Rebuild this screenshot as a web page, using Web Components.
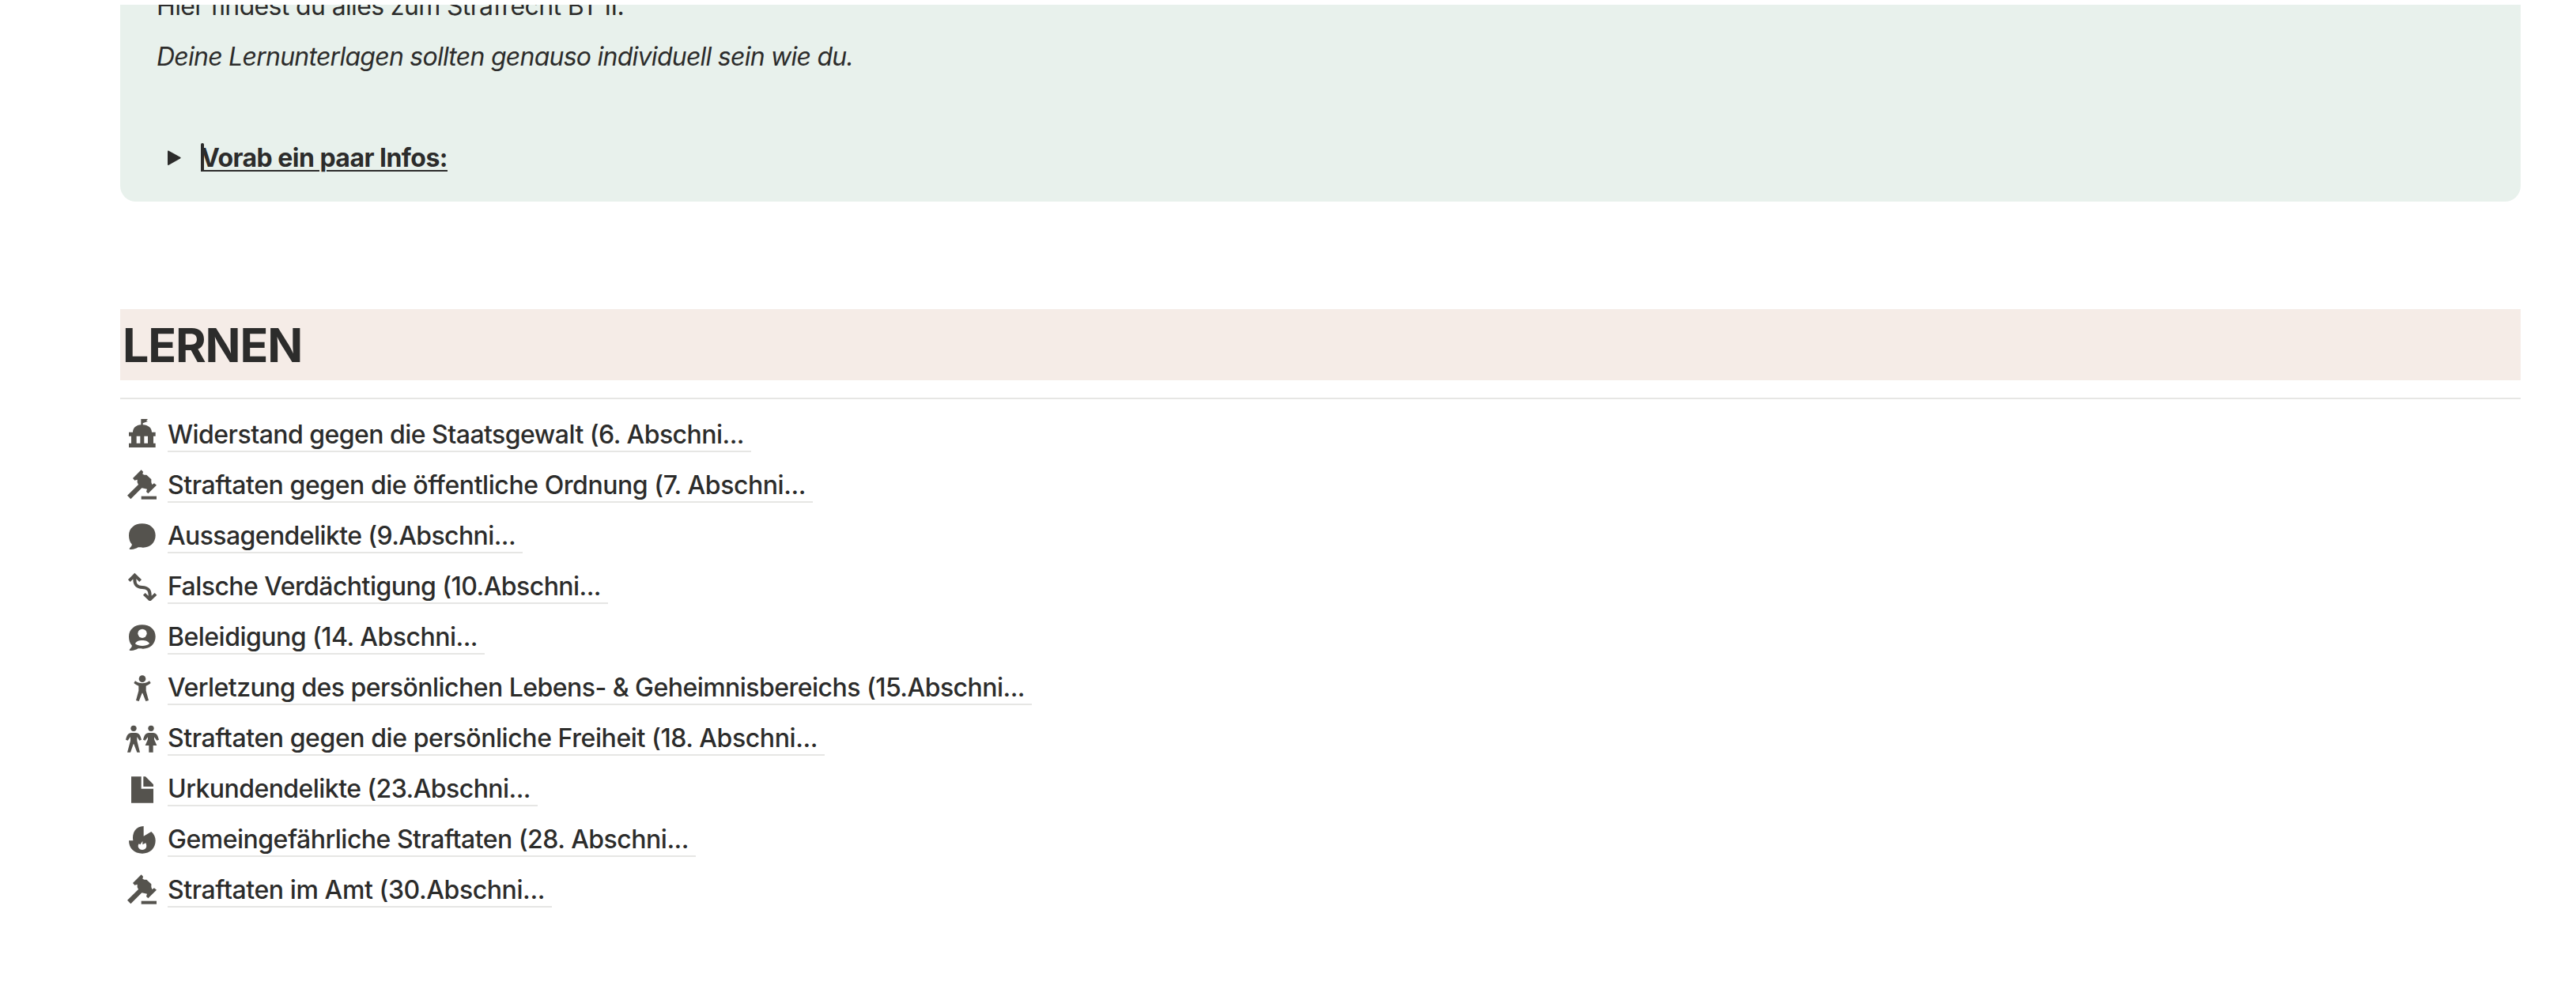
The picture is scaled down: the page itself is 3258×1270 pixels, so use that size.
<!DOCTYPE html>
<html lang="de">
<head>
<meta charset="utf-8">
<title>Strafrecht BT II</title>
<style>
  body {
    margin: 0;
    background: #fff;
    color: #2c2c2b;
    font-family: Inter, "Liberation Sans", sans-serif;
    font-size: 32px;
    line-height: 64px;
  }
</style>
</head>
<body>
<notes-page>
  <info-callout>
    <fit-text width="591">Hier findest du alles zum Strafrecht BT II.</fit-text>
    <fit-text width="881" class="italic">Deine Lernunterlagen sollten genauso individuell sein wie du.</fit-text>
    <toggle-line><fit-text width="312">Vorab ein paar Infos:</fit-text></toggle-line>
  </info-callout>
  <section-title><fit-text width="227">LERNEN</fit-text></section-title>
  <page-link icon="government" width="729">Widerstand gegen die Staatsgewalt (6. Abschni...</page-link>
  <page-link icon="gavel" width="807">Straftaten gegen die öffentliche Ordnung (7. Abschni...</page-link>
  <page-link icon="chat" width="440">Aussagendelikte (9.Abschni...</page-link>
  <page-link icon="path" width="548">Falsche Verdächtigung (10.Abschni...</page-link>
  <page-link icon="user" width="392">Beleidigung (14. Abschni...</page-link>
  <page-link icon="person" width="1084">Verletzung des persönlichen Lebens- &amp; Geheimnisbereichs (15.Abschni...</page-link>
  <page-link icon="couple" width="822">Straftaten gegen die persönliche Freiheit (18. Abschni...</page-link>
  <page-link icon="document" width="459">Urkundendelikte (23.Abschni...</page-link>
  <page-link icon="fire" width="659">Gemeingefährliche Straftaten (28. Abschni...</page-link>
  <page-link icon="gavel" width="477">Straftaten im Amt (30.Abschni...</page-link>
</notes-page>

<script>
const ICONS = {
  government: `<path d="M85 60H111L105 67L111 69L92 76V82C112 83 126 94 126 110H140V125H132V152H140V168H39V152H48V125H39V110H54C54 94 67 83 85 82Z"/><path fill="#fff" d="M68 125h14v27h-14zM97 125h14v27h-14z"/>`,
  gavel: `<path d="M86 61L93 68L91 77L98 80L106 80L124 97V108L127 117L135 112L144 119L112 151L105 144L108 134L99 132L88 130L46 172L33 158L75 117L71 109V98L61 101L54 93Z"/><path d="M86 161H144V173H86Z"/>`,
  chat: `<path d="M89 73C119 73 140 91 140 118C140 146 119 164 93 164C85 164 79 162 74 163C68 167 56 172 45 171C40 171 40 168 43 165C48 160 52 155 50 151C43 144 39 132 39 118C39 91 60 73 89 73Z"/>`,
  path: `<path fill="none" stroke="currentColor" stroke-width="12" d="M61 78V93C61 113 69 122 90 123C111 124 119 133 119 152V167M40 98L61 77L83 98M97 148L119 169L141 148"/>`,
  user: `<path d="M89 73C119 73 140 91 140 118C140 146 119 164 93 164C85 164 79 162 74 163C68 167 56 172 45 171C40 171 40 168 43 165C48 160 52 155 50 151C43 144 39 132 39 118C39 91 60 73 89 73Z"/><circle cx="90" cy="106" r="17" fill="#fff"/><path fill="#fff" d="M63 145C67 128 112 128 117 145C103 156 77 156 63 145Z"/>`,
  person: `<circle cx="90" cy="86" r="13"/><path d="M63 94C77 106 103 106 117 94L122 102C116 107 109 111 104 113V131L114 168L103 171L91 140H89L77 171L66 168L76 131V113C71 111 64 107 58 102Z"/>`,
  couple: `<circle cx="57" cy="82" r="11"/><path d="M49 99H65C79 99 83 111 87 125L79 128L70 114V129L81 173H70L58 142H56L45 173H33L45 129V114L35 128L27 125C31 111 35 99 49 99Z"/><circle cx="123" cy="82" r="11"/><path d="M115 99H131C145 99 149 111 153 125L145 128L135 115V124L145 147H131V173H115V147H101L111 124V115L101 128L93 125C97 111 101 99 115 99Z"/>`,
  document: `<path d="M48 73H86V119H132V173H48Z"/><path d="M94 73H102L132 103V111H94Z"/>`,
  fire: `<path d="M95 69V107L124 90C135 100 140 111 140 124C140 154 119 173 90 173C59 173 39 153 39 124H55C50 95 65 69 95 69Z"/><path fill="#fff" d="M91 126V139L103 133C110 148 103 159 90 159C76 159 70 146 77 136L82 139Z"/>`
};

// Notes page column
class NotesPage extends HTMLElement {
  constructor() {
    super();
    this.attachShadow({ mode: "open" });
    this.shadowRoot.innerHTML = /* html */`
    <style>
      :host {
        display: flex;
        flex-direction: column;
        height: 1270px;
        box-sizing: border-box;
        padding: 6px 70px 0 152px;
        overflow: hidden;
      }
    </style>
    <slot></slot>
    `;
  }
}
customElements.define("notes-page", NotesPage);

// One line of text tracked to a given width
class FitText extends HTMLElement {
  constructor() {
    super();
    this.attachShadow({ mode: "open" });
    this.shadowRoot.innerHTML = /* html */`
    <style>
      :host { display: block; white-space: nowrap; }
      :host(.italic) { font-style: italic; }
    </style>
    <span><slot></slot></span>
    `;
  }

  connectedCallback() {
    const span = this.shadowRoot.querySelector("span");
    const count = this.textContent.length;
    const width = span.getBoundingClientRect().width;
    span.style.letterSpacing = `${(this.getAttribute("width") - width) / count}px`;
  }
}

class InfoCallout extends HTMLElement {
  constructor() {
    super();
    this.attachShadow({ mode: "open" });
    this.shadowRoot.innerHTML = /* html */`
    <style>
      :host {
        display: flex;
        flex-direction: column;
        justify-content: flex-end;
        height: 249px;
        flex: none;
        box-sizing: border-box;
        padding: 0 46px 23px;
        background: #e8f1ec;
        border-radius: 0 0 20px 20px;
        overflow: hidden;
      }
      ::slotted(toggle-line) { margin-top: 64px; }
    </style>
    <slot></slot>
    `;
  }
}
customElements.define("info-callout", InfoCallout);

class ToggleLine extends HTMLElement {
  constructor() {
    super();
    this.attachShadow({ mode: "open" });
    this.shadowRoot.innerHTML = /* html */`
    <style>
      :host {
        display: flex;
        align-items: center;
        padding-left: 14px;
      }
      svg { width: 17px; height: 20px; margin-right: 25px; }
      .label {
        position: relative;
        font-weight: 650;
        text-decoration: underline 2px;
        text-underline-offset: 4px;
      }
      .caret {
        position: absolute;
        left: 0;
        top: 13px;
        width: 4px;
        height: 36px;
        border-radius: 2px 2px 0 0;
        background: #2c2c2b;
      }
    </style>
    <svg viewBox="0 0 17 20"><path fill="#2c2c2b" d="M0 1.5Q0 0 1.5 .7L16 8.7Q17.4 9.6 16 10.5L1.5 18.8Q0 19.5 0 18Z"/></svg>
    <div class="label"><slot></slot><div class="caret"></div></div>
    `;
  }
}
customElements.define("toggle-line", ToggleLine);

class SectionTitle extends HTMLElement {
  constructor() {
    super();
    this.attachShadow({ mode: "open" });
    this.shadowRoot.innerHTML = /* html */`
    <style>
      :host { display: block; margin: 136px 0 13px; }
      h1 {
        margin: 0 0 22px;
        padding-left: 3px;
        height: 90px;
        background: #f5ece7;
        font-size: 59px;
        font-weight: 650;
        line-height: 92px;
      }
      .rule { height: 2px; background: #e6e6e4; }
    </style>
    <h1><slot></slot></h1>
    <div class="rule"></div>
    `;
  }
}
customElements.define("section-title", SectionTitle);

class PageLink extends HTMLElement {
  constructor() {
    super();
    this.attachShadow({ mode: "open" });
  }

  connectedCallback() {
    this.render();
  }

  render() {
    this.shadowRoot.innerHTML = /* html */`
    <style>
      :host {
        display: flex;
        height: 64px;
        padding-left: 6px;
        font-weight: 500;
      }
      svg {
        width: 44px;
        height: 40px;
        margin: 10px 10px 0 0;
        color: #55534e;
        fill: currentColor;
      }
      .title {
        height: 52px;
        padding-right: 9px;
        line-height: 64px;
        border-bottom: 2px solid #e6e6e4;
      }
    </style>
    <svg viewBox="24 54 132 120">${ICONS[this.getAttribute("icon")]}</svg>
    <div class="title"><fit-text width="${this.getAttribute("width")}">${this.innerHTML}</fit-text></div>
    `;
  }
}
customElements.define("page-link", PageLink);
customElements.define("fit-text", FitText);
</script>
</body>
</html>
